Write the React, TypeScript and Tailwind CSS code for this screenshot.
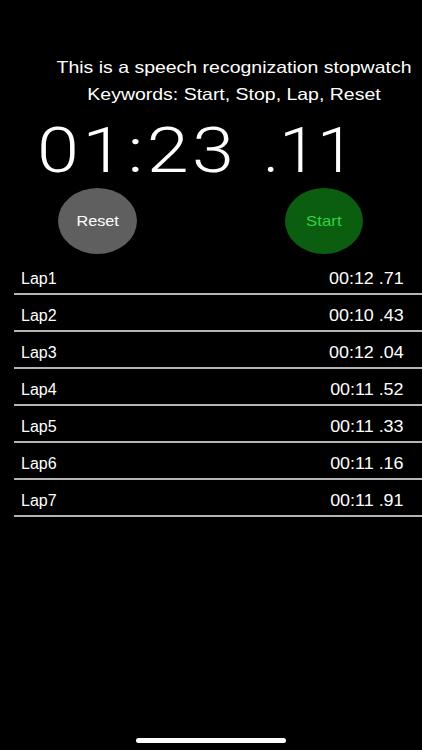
import React from 'react';

const laps = [
  { name: 'Lap1', time: '00:12 .71' },
  { name: 'Lap2', time: '00:10 .43' },
  { name: 'Lap3', time: '00:12 .04' },
  { name: 'Lap4', time: '00:11 .52' },
  { name: 'Lap5', time: '00:11 .33' },
  { name: 'Lap6', time: '00:11 .16' },
  { name: 'Lap7', time: '00:11 .91' },
];

export default function App() {
  return (
    <div
      className="relative flex h-[750px] w-[422px] flex-col overflow-hidden bg-black text-white"
      style={{ fontFamily: '"Liberation Sans", Arial, sans-serif' }}
    >
      {/* header text */}
      <div className="pl-[46px] pt-[54px]">
        <div className="flex scale-x-[1.18] flex-col items-center text-[16.5px] leading-[27px]">
          <p>This is a speech recognization stopwatch</p>
          <p>Keywords: Start, Stop, Lap, Reset</p>
        </div>
      </div>

      {/* timer */}
      <div
        className="mt-[11px] flex h-[63px] items-center pl-[37px] text-[63px] font-light leading-none"
        style={{ fontFamily: 'Roboto, "Liberation Sans", sans-serif' }}
      >
        <div className="w-[226px]">
          <span className="inline-block origin-left scale-x-[1.2] tracking-[2.8px]">01:23</span>
        </div>
        <span className="inline-block origin-left scale-x-[1.08]">.11</span>
      </div>

      {/* controls */}
      <div className="mt-[6px] flex items-center justify-between pl-[58px] pr-[59px]">
        <button className="flex h-[66px] w-[79px] items-center justify-center rounded-[50%] bg-[#5f5f5f] text-[15px] text-white">
          <span className="inline-block scale-x-[1.08]">Reset</span>
        </button>
        <button className="flex h-[66px] w-[78px] items-center justify-center rounded-[50%] bg-[#0b5e10] text-[15px] text-[#30d33c]">
          <span className="inline-block scale-x-[1.12]">Start</span>
        </button>
      </div>

      {/* laps */}
      <div className="mt-[4px] flex flex-col pl-[14px]">
        {laps.map((lap) => (
          <div
            key={lap.name}
            className="flex h-[37px] items-end justify-between border-b-2 border-[#b4b4b4] pb-[6px] pl-[7px] pr-[18px] text-[16px] leading-[16px]"
          >
            <span>{lap.name}</span>
            <span className="inline-block origin-right scale-x-[1.12]">{lap.time}</span>
          </div>
        ))}
      </div>

      {/* home indicator */}
      <div className="absolute bottom-[7px] left-[136px] h-[5px] w-[150px] rounded-full bg-white" />
    </div>
  );
}
